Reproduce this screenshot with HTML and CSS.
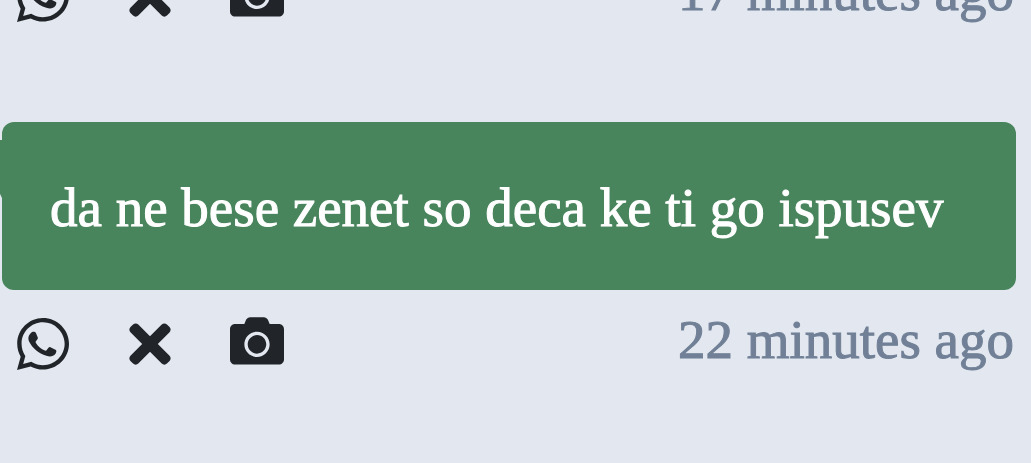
FILE: index.html
```html
<!DOCTYPE html>
<html lang="mk">
<head>
    <meta charset="UTF-8">
    <meta name="viewport" content="width=device-width, initial-scale=1.0">
    <title>Messages</title>
    <link rel="stylesheet" href="styles.css">
</head>
<body>

    <!-- icons -->
    <svg class="sprite" aria-hidden="true">
        <symbol id="whatsapp" viewBox="0 0 448 512">
            <path d="M380.9 97.1C339 55.1 283.2 32 223.9 32c-122.4 0-222 99.6-222 222 0 39.1 10.2 77.3 29.6 111L0 480l117.7-30.9c32.4 17.7 68.9 27 106.1 27h.1c122.3 0 224.1-99.6 224.1-222 0-59.3-25.2-115-67.1-157zm-157 341.6c-33.2 0-65.7-8.9-94-25.7l-6.7-4-69.8 18.3L72 359.2l-4.4-7c-18.5-29.4-28.2-63.3-28.2-98.2 0-101.7 82.8-184.5 184.6-184.5 49.3 0 95.6 19.2 130.4 54.1 34.8 34.9 56.2 81.2 56.1 130.5 0 101.8-84.9 184.6-186.6 184.6z"/>
            <path d="M116 166c8-13 20-18 34-15 7 1 11 5 14 12l15 37c2 6 1 11-3 16l-13 16c-4 5-4 9 0 15 19 31 44 53 77 66 6 2 10 2 14-3l19-23c4-5 9-6 15-3l43 21c6 3 9 7 8 14-2 19-12 31-29 39-17 8-36 7-57 0-67-21-120-65-150-126-9-22-7-47 13-66z"/>
        </symbol>
        <symbol id="close" viewBox="0 0 352 512">
            <path d="M242.72 256l100.07-100.07c12.28-12.28 12.28-32.19 0-44.48l-22.24-22.24c-12.28-12.28-32.19-12.28-44.48 0L176 189.28 75.93 89.21c-12.28-12.28-32.19-12.28-44.48 0L9.21 111.45c-12.28 12.28-12.28 32.19 0 44.48L109.28 256 9.21 356.07c-12.28 12.28-12.28 32.19 0 44.48l22.24 22.24c12.28 12.28 32.2 12.28 44.48 0L176 322.72l100.07 100.07c12.28 12.28 32.2 12.28 44.48 0l22.24-22.24c12.28-12.28 12.28-32.19 0-44.48L242.72 256z"/>
        </symbol>
        <symbol id="camera" viewBox="0 0 512 569">
            <path d="M512 144v288c0 26.500-21.500 48-48 48H48c-26.500 0-48-21.500-48-48V144c0-26.500 21.500-48 48-48h88l12.300-32.900c7-18.700 24.900-31.100 44.900-31.100h125.500c20 0 37.900 12.400 44.900 31.100L376 96h88c26.500 0 48 21.500 48 48zM376 288c0-66.200-53.800-120-120-120s-120 53.800-120 120 53.800 120 120 120 120-53.800 120-120zm-32 0c0 48.500-39.500 88-88 88s-88-39.500-88-88 39.500-88 88-88 88 39.500 88 88z"/>
        </symbol>
    </svg>

    <main class="feed">
        <article class="message">
            <div class="meta">
                <div class="actions">
                    <button type="button" aria-label="WhatsApp"><svg class="icon-whatsapp"><use href="#whatsapp"/></svg></button>
                    <button type="button" aria-label="Close"><svg class="icon-close"><use href="#close"/></svg></button>
                    <button type="button" aria-label="Camera"><svg class="icon-camera"><use href="#camera"/></svg></button>
                </div>
                <time>17 minutes ago</time>
            </div>
        </article>

        <article class="message">
            <p class="bubble">da ne bese zenet so deca ke ti go ispusev</p>
            <div class="meta">
                <div class="actions">
                    <button type="button" aria-label="WhatsApp"><svg class="icon-whatsapp"><use href="#whatsapp"/></svg></button>
                    <button type="button" aria-label="Close"><svg class="icon-close"><use href="#close"/></svg></button>
                    <button type="button" aria-label="Camera"><svg class="icon-camera"><use href="#camera"/></svg></button>
                </div>
                <time>22 minutes ago</time>
            </div>
        </article>
    </main>

</body>
</html>
```

FILE: styles.css
```css
* { box-sizing: border-box; }

body {
    margin: 0;
    background-color: #e2e7f0;
    font-family: "Liberation Serif", serif;
    font-size: 55px;
    line-height: 72px;
    -webkit-text-stroke: 1px;
}

.sprite { display: none; }

/* newest scroll position: the list sits on the bottom edge */
.feed {
    display: flex;
    flex-direction: column;
    justify-content: flex-end;
    gap: 72px;
    height: 100vh;
    padding: 0 15px 65px 2px;
    overflow: hidden;
}

.message { flex-shrink: 0; }

.bubble {
    position: relative;
    margin: 0;
    padding: 50px 48px 46px;
    border-radius: 12px;
    background-color: #48845c;
    color: #fff;
}

/* speech tail */
.bubble::before {
    content: "";
    position: absolute;
    top: 18px;
    left: -28px;
    width: 28px;
    height: 58px;
    background-color: #48845c;
    clip-path: polygon(0 0, 100% 0, 100% 100%);
}

.meta {
    display: flex;
    align-items: flex-start;
    justify-content: space-between;
    padding: 14px 2px 18px 14px;
    color: #718096;
}

.actions {
    display: flex;
    gap: 53px;
    padding-top: 4px;
}

.actions button {
    display: flex;
    align-items: center;
    justify-content: center;
    width: 54px;
    height: 72px;
    padding: 0;
    border: none;
    background: none;
    color: #212529;
    cursor: pointer;
}

.actions svg {
    flex-shrink: 0;
    height: 60px;
    fill: currentColor;
}

.icon-whatsapp { width: 52px; }
.icon-close { width: 42px; }
.icon-camera { width: 54px; }
```
